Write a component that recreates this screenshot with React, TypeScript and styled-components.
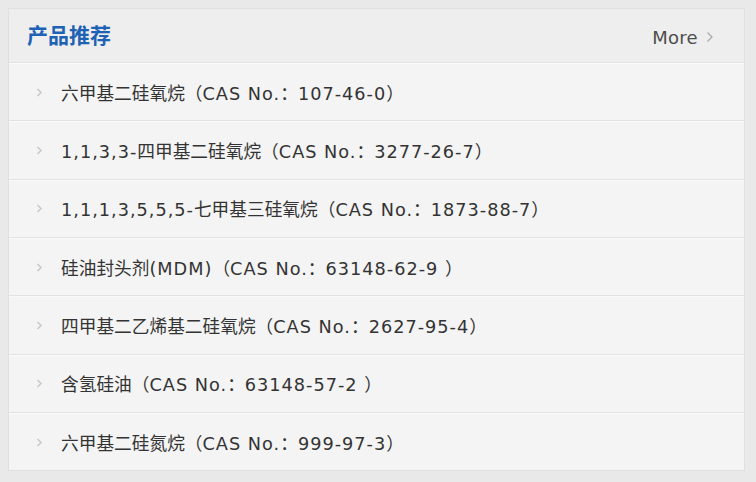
import React from "react";
import styled, { createGlobalStyle } from "styled-components";

const Global = createGlobalStyle`
  html, body { margin: 0; padding: 0; }
  body {
    background: #e9e9e9;
    padding: 8px;
    font-family: "DejaVu Sans", Verdana, "Noto Sans CJK SC", sans-serif;
  }
`;

const Panel = styled.div`
  width: 735px;
  border: 1px solid #e0e0e0;
  background: #f4f4f4;
`;

const Header = styled.div`
  height: 53px;
  background: #eeeeee;
  display: flex;
  align-items: center;
  justify-content: space-between;
  padding: 0 30px 0 18px;
  box-sizing: border-box;
`;

const Title = styled.h2`
  margin: 0;
  font-family: "Noto Sans CJK SC", sans-serif;
  font-size: 21px;
  font-weight: 700;
  color: #1d62b5;
  margin-top: -3px;
`;

const More = styled.a`
  display: flex;
  align-items: center;
  gap: 8px;
  font-size: 18px;
  letter-spacing: 0.3px;
  color: #4d4d4d;
  text-decoration: none;
  margin-top: 3px;
`;

const List = styled.ul`
  list-style: none;
  margin: 0;
  padding: 0;
`;

const Row = styled.li`
  height: 57.33px;
  border-top: 1px solid #e2e2e2;
  box-shadow: inset 0 1px 0 #fafafa;
  display: flex;
  align-items: center;
  padding-left: 27px;
  gap: 18px;
  font-size: 17.7px;
  color: #333333;
  font-family: "DejaVu Sans", Verdana, "Noto Sans CJK SC", sans-serif;
`;

const Latin = styled.span`
  letter-spacing: 1px;
`;

const Bullet = styled.svg`
  flex: none;
  margin-top: 1px;
`;

const Chevron = ({ color = "#c9c9c9" }: { color?: string }) => (
  <Bullet width={7} height={9} viewBox="0 0 7 9">
    <path d="M1.5 1 L5 4.5 L1.5 8" fill="none" stroke={color} strokeWidth="1.6" />
  </Bullet>
);

const items = [
  "六甲基二硅氧烷（CAS No.：107-46-0）",
  "1,1,3,3-四甲基二硅氧烷（CAS No.：3277-26-7）",
  "1,1,1,3,5,5,5-七甲基三硅氧烷（CAS No.：1873-88-7）",
  "硅油封头剂(MDM)（CAS No.：63148-62-9 ）",
  "四甲基二乙烯基二硅氧烷（CAS No.：2627-95-4）",
  "含氢硅油（CAS No.：63148-57-2 ）",
  "六甲基二硅氮烷（CAS No.：999-97-3）",
];

const CJK = /[\u3000-\u9fff\uff00-\uffef]/;
const splitRuns = (t: string) => t.match(/[\u3000-\u9fff\uff00-\uffef]+|[^\u3000-\u9fff\uff00-\uffef]+/g) ?? [];

export default function App() {
  return (
    <>
      <Global />
      <Panel>
        <Header>
          <Title>产品推荐</Title>
          <More href="#">
            More
            <svg width="8" height="12" viewBox="0 0 8 12">
              <path d="M1.5 1.5 L6 6 L1.5 10.5" fill="none" stroke="#aaaaaa" strokeWidth="1.3" />
            </svg>
          </More>
        </Header>
        <List>
          {items.map((t) => (
            <Row key={t}>
              <Chevron />
              <span>
                {splitRuns(t).map((r, i) =>
                  CJK.test(r) ? <React.Fragment key={i}>{r}</React.Fragment> : <Latin key={i}>{r}</Latin>
                )}
              </span>
            </Row>
          ))}
        </List>
      </Panel>
    </>
  );
}
